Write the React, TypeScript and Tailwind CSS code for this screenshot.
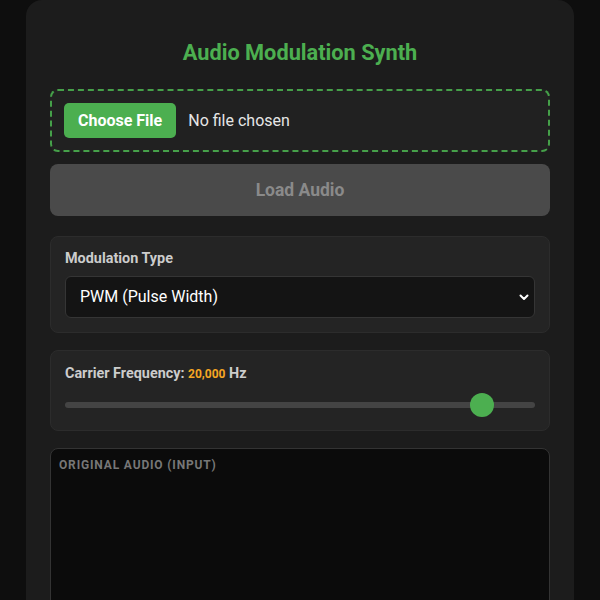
import { useState } from 'react';

const MIN_FREQ = 0;
const MAX_FREQ = 22000;

export default function App() {
  const [freq] = useState(20000);
  const pct = ((freq - MIN_FREQ) / (MAX_FREQ - MIN_FREQ)) * 100;

  return (
    <div className="min-h-screen bg-[#0e0e0e] font-['Roboto',sans-serif]">
      <div className="mx-auto w-[548px] min-h-[600px] rounded-t-2xl bg-[#1c1c1c] px-6 pt-[39px] pb-6">
        <h1 className="text-center text-[21.75px] leading-7 font-bold text-[#4caf50]">
          Audio Modulation Synth
        </h1>

        <div className="mt-[22px] flex items-center gap-3 rounded-lg border-2 border-dashed border-[#45a049] bg-[#212121] px-3 py-3">
          <button className="h-[35px] rounded-[5px] bg-[#4caf50] px-[14px] text-[16px] font-bold text-white">
            Choose File
          </button>
          <span className="text-[16px] text-[#e6e6e6]">No file chosen</span>
        </div>

        <button className="mt-[12px] h-[52px] w-full rounded-lg bg-[#4a4a4a] text-[17.5px] font-bold text-[#8a8a8a]">
          Load Audio
        </button>

        <section className="mt-[20px] rounded-lg border border-[#2c2c2c] bg-[#242424] px-[14px] pt-[13px] pb-[14px]">
          <label className="block text-[14.4px] leading-[17px] font-bold text-[#cccccc]">
            Modulation Type
          </label>
          <div className="relative mt-[9px]">
            <select
              defaultValue="pwm"
              className="h-[42px] w-full appearance-none rounded-md border border-[#353535] bg-[#141414] pl-[14px] text-[16px] text-white outline-none"
            >
              <option value="am">AM (Amplitude)</option>
              <option value="fm">FM (Frequency)</option>
              <option value="pwm">PWM (Pulse Width)</option>
            </select>
            <svg
              className="pointer-events-none absolute right-[5px] top-1/2 -translate-y-1/2"
              width="12"
              height="12"
              viewBox="0 0 24 24"
              fill="none"
              stroke="#ffffff"
              strokeWidth="4"
              strokeLinecap="round"
              strokeLinejoin="round"
            >
              <path d="M5 9l7 7 7-7" />
            </svg>
          </div>
        </section>

        <section className="mt-[17px] rounded-lg border border-[#2c2c2c] bg-[#242424] px-[14px] pt-[14px] pb-[13px]">
          <div className="text-[14.4px] leading-[17px] font-bold text-[#cccccc]">
            Carrier Frequency: <span className="text-[12px] text-[#f5a623]">{freq.toLocaleString('en-US')}</span> Hz
          </div>
          <div className="relative mt-[10px] h-[24px]">
            <div className="absolute left-0 right-0 top-1/2 h-[6px] -translate-y-1/2 rounded-full bg-[#444444]" />
            <div
              className="absolute top-0 h-[24px] w-[24px] rounded-full bg-[#4caf50]"
              style={{ left: `calc(${pct}% * (470 - 24) / 470)` }}
            />
          </div>
        </section>

        <section className="mt-[17px] h-[200px] rounded-lg border border-[#333333] bg-[#0b0b0b] px-2 pt-2">
          <div className="text-[12px] leading-4 font-bold uppercase tracking-[0.07em] text-[#777777]">
            Original Audio (Input)
          </div>
        </section>
      </div>
    </div>
  );
}
